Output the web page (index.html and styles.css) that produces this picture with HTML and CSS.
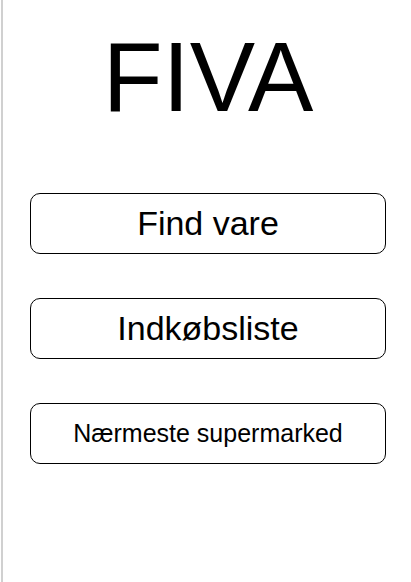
FILE: index.html
```html
<!DOCTYPE html>
<html lang="da">
<head>
<meta charset="utf-8">
<title>FIVA</title>
<link rel="stylesheet" href="styles.css">
</head>
<body>
<div class="page">
  <h1 class="title">FIVA</h1>
  <nav class="menu">
    <button class="menu-btn big">Find vare</button>
    <button class="menu-btn big">Indkøbsliste</button>
    <button class="menu-btn small">Nærmeste supermarked</button>
  </nav>
</div>
</body>
</html>
```
FILE: styles.css
```css
html, body {
  margin: 0;
  padding: 0;
  background: #fff;
}
body {
  font-family: "Liberation Sans", Arial, sans-serif;
  color: #000;
}
.page {
  margin-left: 1px;
  border-left: 2px solid #d0d0d0;
  min-height: 582px;
  box-sizing: border-box;
  padding: 27px 25px 0 27px;
}
.title {
  margin: 0;
  font-weight: normal;
  font-size: 98px;
  line-height: 100px;
  text-align: center;
}
.menu {
  margin-top: 66px;
  display: flex;
  flex-direction: column;
  gap: 44px;
}
.menu-btn {
  height: 61px;
  box-sizing: border-box;
  border: 1px solid #000;
  border-radius: 10px;
  background: #fff;
  color: #000;
  font-family: "Liberation Sans", Arial, sans-serif;
  padding: 0;
  display: flex;
  align-items: center;
  justify-content: center;
}
.menu-btn.big {
  font-size: 34px;
}
.menu-btn.small {
  font-size: 25px;
}
```
